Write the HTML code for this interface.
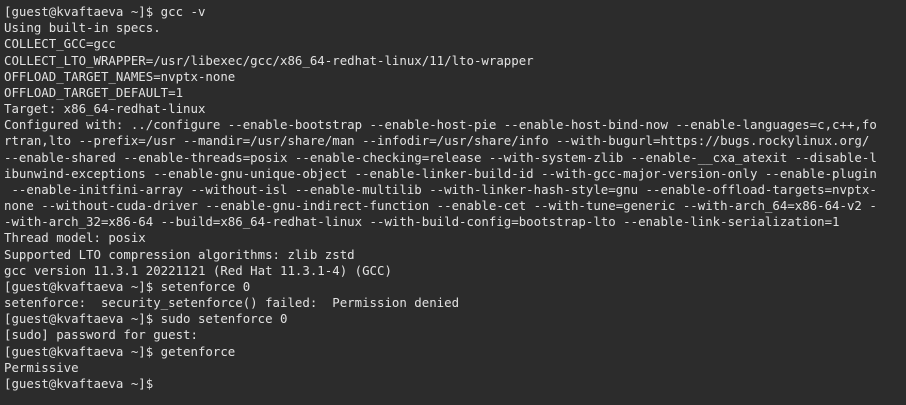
<!DOCTYPE html>
<html><head><meta charset="utf-8"><style>
html,body{margin:0;padding:0;background:#2c2c2c;width:906px;height:405px;overflow:hidden}
pre{margin:0;padding:4px 0 0 4px;font-family:"DejaVu Sans Mono","Liberation Mono",monospace;font-size:12.4px;line-height:16.17px;color:#e2e2e2;white-space:pre}
</style></head><body><pre>[guest@kvaftaeva ~]$ gcc -v
Using built-in specs.
COLLECT_GCC=gcc
COLLECT_LTO_WRAPPER=/usr/libexec/gcc/x86_64-redhat-linux/11/lto-wrapper
OFFLOAD_TARGET_NAMES=nvptx-none
OFFLOAD_TARGET_DEFAULT=1
Target: x86_64-redhat-linux
Configured with: ../configure --enable-bootstrap --enable-host-pie --enable-host-bind-now --enable-languages=c,c++,fo
rtran,lto --prefix=/usr --mandir=/usr/share/man --infodir=/usr/share/info --with-bugurl=https://bugs.rockylinux.org/
--enable-shared --enable-threads=posix --enable-checking=release --with-system-zlib --enable-__cxa_atexit --disable-l
ibunwind-exceptions --enable-gnu-unique-object --enable-linker-build-id --with-gcc-major-version-only --enable-plugin
 --enable-initfini-array --without-isl --enable-multilib --with-linker-hash-style=gnu --enable-offload-targets=nvptx-
none --without-cuda-driver --enable-gnu-indirect-function --enable-cet --with-tune=generic --with-arch_64=x86-64-v2 -
-with-arch_32=x86-64 --build=x86_64-redhat-linux --with-build-config=bootstrap-lto --enable-link-serialization=1
Thread model: posix
Supported LTO compression algorithms: zlib zstd
gcc version 11.3.1 20221121 (Red Hat 11.3.1-4) (GCC)
[guest@kvaftaeva ~]$ setenforce 0
setenforce:  security_setenforce() failed:  Permission denied
[guest@kvaftaeva ~]$ sudo setenforce 0
[sudo] password for guest:
[guest@kvaftaeva ~]$ getenforce
Permissive
[guest@kvaftaeva ~]$ </pre></body></html>
